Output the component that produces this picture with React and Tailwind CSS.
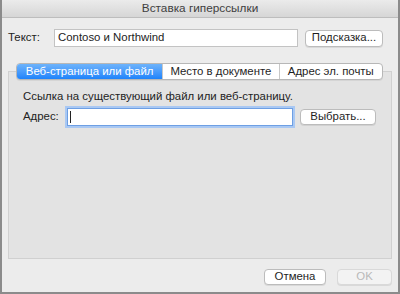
import React from 'react';

const font = { fontFamily: '"Liberation Sans", Arial, sans-serif' };

const Button = ({ children, className = '', disabled }) => (
  <div
    className={`flex items-center justify-center rounded-[4px] border text-[11.4px] leading-none shadow-[0_1px_0_rgba(0,0,0,0.08)] ${
      disabled ? 'border-[#d9d9d9] bg-[#f3f3f3] text-[#b9b9b9]' : 'border-[#bcbcbc] bg-white text-[#1e1e1e]'
    } ${className}`}
  >
    {children}
  </div>
);

const tabs = [
  { label: 'Веб-страница или файл', w: 'w-[146px]', active: true },
  { label: 'Место в документе', w: 'w-[117px]' },
  { label: 'Адрес эл. почты', w: 'w-[104px]' },
];

export default function App() {
  return (
    <div
      style={font}
      className="flex h-[294px] w-[400px] flex-col border-b-2 border-l-2 border-r-2 border-[#8b8b8b] bg-[#ececec] text-[#222]"
    >
      {/* title bar */}
      <div className="flex h-[18px] shrink-0 items-center justify-center border-b border-[#bdbdbd] bg-gradient-to-b from-[#ebebeb] to-[#d6d6d6] text-[11.8px] text-[#404040]">
        Вставка гиперссылки
      </div>

      {/* text row */}
      <div className="mt-[11px] flex items-center pl-[6px]">
        <span className="w-[46px] text-[11.4px]">Текст:</span>
        <div className="flex h-[18px] w-[244px] items-center border border-[#c3c3c3] bg-white pl-[3px] text-[11.4px]">
          Contoso и Northwind
        </div>
        <Button className="ml-[7px] h-[17px] w-[78px]">Подсказка...</Button>
      </div>

      {/* tab panel */}
      <div className="mx-[6px] mt-[24px] flex h-[188px] flex-col border border-[#d0d0d0] bg-[#e3e3e3]">
        <div className="-mt-[9px] ml-[7px] flex h-[17px] w-[367px] overflow-hidden rounded-[4px] border border-[#b7b7b7] bg-white text-[11.4px] shadow-[0_1px_0_rgba(0,0,0,0.06)]">
          {tabs.map((t, i) => (
            <div
              key={t.label}
              className={`flex items-center justify-center ${t.w} ${
                i > 0 ? 'border-l border-[#c8c8c8]' : ''
              } ${t.active ? 'bg-gradient-to-b from-[#6db3fb] to-[#1c83fb] text-white' : 'text-[#1e1e1e]'}`}
            >
              {t.label}
            </div>
          ))}
        </div>

        <div className="ml-[14px] mt-[9px] text-[11.4px] leading-[14px]">
          Ссылка на существующий файл или веб-страницу.
        </div>

        <div className="ml-[14px] mt-[5px] flex items-center">
          <span className="w-[44px] text-[11.4px]">Адрес:</span>
          <div className="flex h-[18px] w-[226px] items-center border border-[#6e9fe3] bg-white pl-[2px] shadow-[0_0_0_2px_#a9c8f3]">
            <div className="h-[12px] w-px bg-[#222]" />
          </div>
          <Button className="ml-[7px] h-[16px] w-[76px]">Выбрать...</Button>
        </div>
      </div>

      {/* footer */}
      <div className="mt-[10px] flex justify-end pr-[6px]">
        <Button className="h-[16px] w-[62px]">Отмена</Button>
        <Button disabled className="ml-[11px] h-[16px] w-[55px]">
          OK
        </Button>
      </div>
    </div>
  );
}
